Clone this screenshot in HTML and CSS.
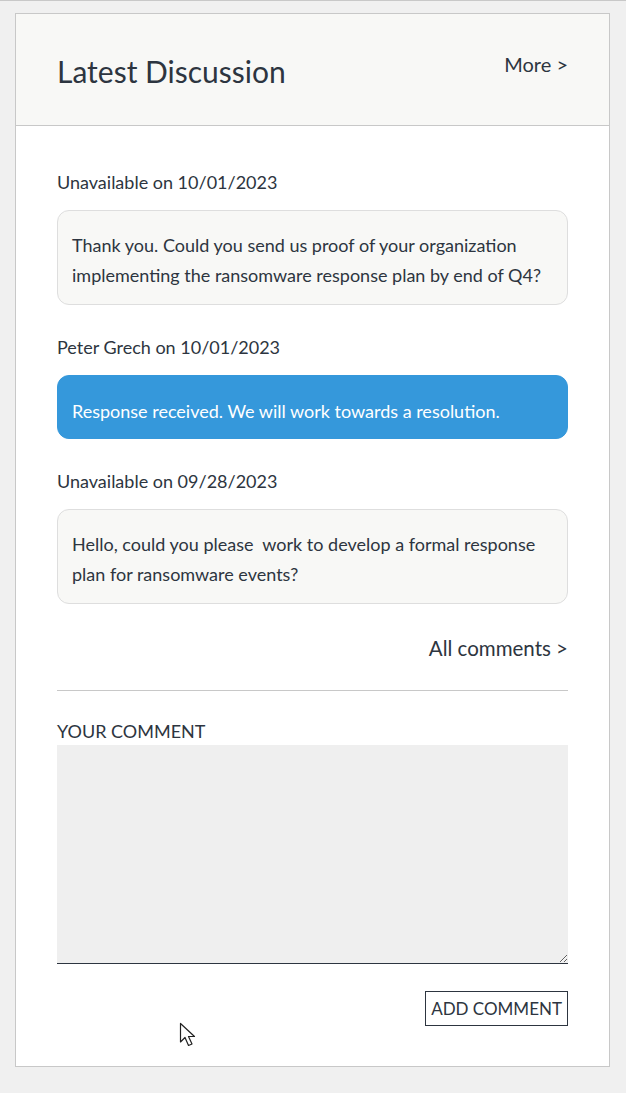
FILE: index.html
```html
<!DOCTYPE html>
<html lang="en">
<head>
    <meta charset="UTF-8">
    <meta name="viewport" content="width=device-width, initial-scale=1.0">
    <title>Latest Discussion</title>
    <link rel="stylesheet" href="styles.css">
</head>
<body>
    <div class="card">
        <div class="card-header">
            <h2>Latest Discussion</h2>
            <a class="more" href="#">More &gt;</a>
        </div>
        <div class="card-body">
            <div class="comment">
                <div class="meta">Unavailable on 10/01/2023</div>
                <div class="bubble">Thank you. Could you send us proof of your organization implementing the ransomware response plan by end of Q4?</div>
            </div>
            <div class="comment">
                <div class="meta">Peter Grech on 10/01/2023</div>
                <div class="bubble mine">Response received. We will work towards a resolution.</div>
            </div>
            <div class="comment">
                <div class="meta">Unavailable on 09/28/2023</div>
                <div class="bubble">Hello, could you please&nbsp; work to develop a formal response plan for ransomware events?</div>
            </div>
            <div class="all-comments"><a href="#">All comments &gt;</a></div>
            <hr>
            <label for="comment" class="field-label">YOUR COMMENT</label>
            <textarea id="comment"></textarea>
            <div class="actions">
                <button>ADD COMMENT</button>
            </div>
        </div>
    </div>

    <svg class="pointer" width="20" height="28" viewBox="0 0 20 28">
        <path d="M1.5 1.5 L1.5 20 L6 15.5 L9.5 23.5 L13 22 L9.5 14.5 L15.5 14.5 Z" fill="#fff" stroke="#222" stroke-width="1.2" stroke-linejoin="round"/>
    </svg>
</body>
</html>
```

FILE: styles.css
```css
html {
    background-color: #f0f0f0;
}
body {
    font-family: Lato, "Open Sans", sans-serif;
    color: #2d3540;
    margin: 0;
    padding: 12px 16px 26px 15px;
    border-top: 1px solid #c8c8c8;
    position: relative;
}
a {
    color: #2d3540;
    text-decoration: none;
}
.card {
    background-color: #fff;
    border: 1px solid #c8c8c8;
}
.card-header {
    background-color: #f8f8f6;
    border-bottom: 1px solid #c8c8c8;
    height: 111px;
    padding: 0 41px 0 41px;
    display: flex;
    justify-content: space-between;
    align-items: flex-start;
}
.card-header h2 {
    margin: 38px 0 0;
    font-size: 30px;
    font-weight: 400;
    line-height: 38px;
}
.more {
    margin-top: 38px;
    font-size: 20px;
    line-height: 24px;
}
.card-body {
    padding: 44px 41px 40px;
}
.comment {
    margin-bottom: 30px;
}
.meta {
    font-size: 18px;
    line-height: 24px;
    margin-bottom: 16px;
}
.bubble {
    background-color: #f8f8f6;
    border: 1px solid #dedede;
    border-radius: 12px;
    padding: 19px 14px 14px;
    font-size: 18px;
    line-height: 30px;
}
.bubble.mine {
    background-color: #3598db;
    border-color: #3598db;
    color: #fff;
    padding-top: 20px;
    padding-bottom: 12px;
}
.all-comments {
    text-align: right;
    font-size: 20.5px;
    line-height: 24px;
    padding-top: 2px;
}
hr {
    border: none;
    border-top: 1px solid #c8c8c8;
    margin: 30px 0 28px;
}
.field-label {
    display: block;
    font-size: 18px;
    line-height: 24px;
    margin-bottom: 2px;
}
textarea {
    display: block;
    width: 100%;
    height: 219px;
    box-sizing: border-box;
    background-color: #efefef;
    border: none;
    border-bottom: 1px solid #2d3540;
    margin: 0;
    font-family: inherit;
}
.actions {
    display: flex;
    justify-content: flex-end;
    margin-top: 27px;
}
button {
    background-color: #fff;
    border: 1px solid #2d3540;
    color: #2d3540;
    font-family: inherit;
    font-size: 17px;
    padding: 6px 5px 5px;
    line-height: 22px;
}
.pointer {
    position: absolute;
    left: 179px;
    top: 1021px;
}
```
